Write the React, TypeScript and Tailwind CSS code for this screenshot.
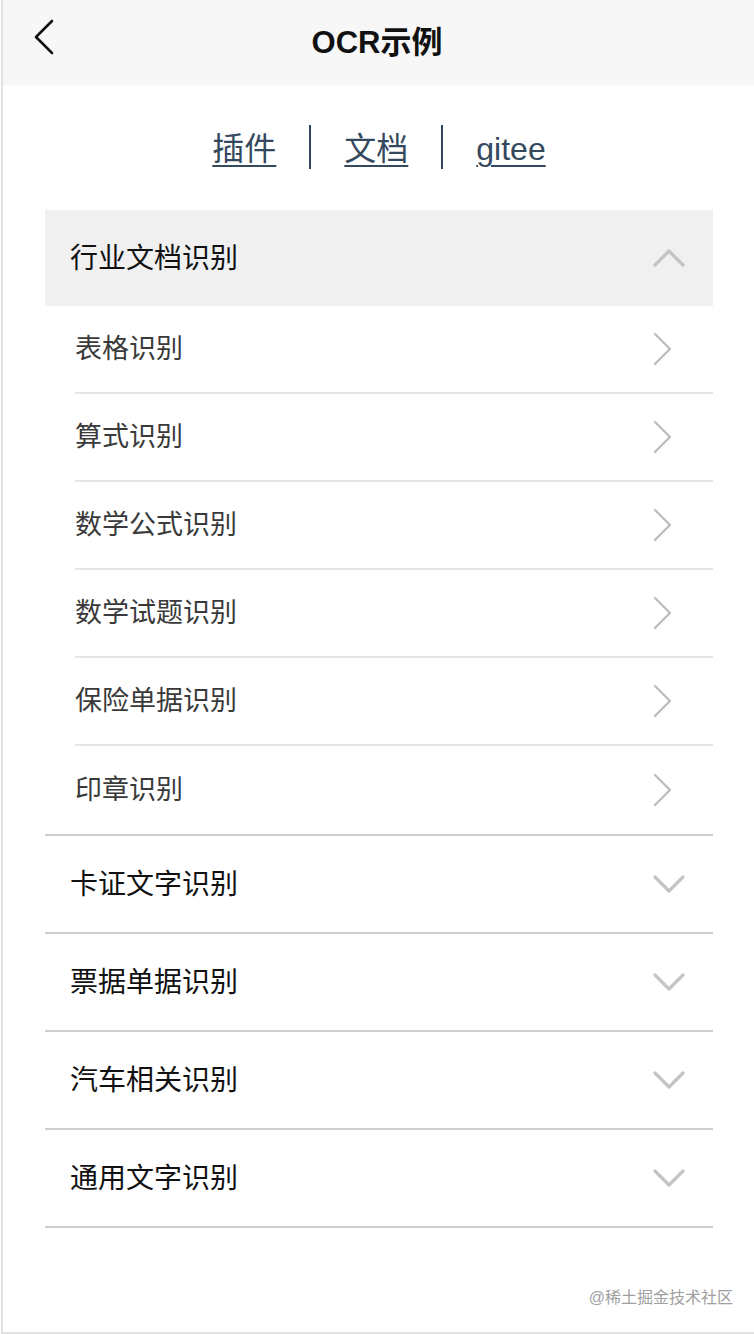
import React, { useState } from 'react';

const font = { fontFamily: '"Liberation Sans", "Noto Sans CJK SC", sans-serif' };

const sections = [
  {
    id: 'doc',
    title: '行业文档识别',
    items: ['表格识别', '算式识别', '数学公式识别', '数学试题识别', '保险单据识别', '印章识别'],
  },
  { id: 'card', title: '卡证文字识别', items: [] },
  { id: 'bill', title: '票据单据识别', items: [] },
  { id: 'car', title: '汽车相关识别', items: [] },
  { id: 'common', title: '通用文字识别', items: [] },
];

const links = ['插件', '文档', 'gitee'];

const BackIcon = () => (
  <svg width="22" height="36" viewBox="0 0 22 36" fill="none">
    <path d="M19 2 L3 18 L19 34" stroke="#111" strokeWidth="2.6" strokeLinecap="round" strokeLinejoin="round" />
  </svg>
);

const Chevron = ({ up }: { up: boolean }) => (
  <svg width="32" height="20" viewBox="0 0 32 20" fill="none">
    <path
      d={up ? 'M2 17 L16 3 L30 17' : 'M2 3 L16 17 L30 3'}
      stroke="#c4c4c4"
      strokeWidth="3.2"
      strokeLinecap="round"
      strokeLinejoin="round"
    />
  </svg>
);

const ArrowRight = () => (
  <svg width="20" height="34" viewBox="0 0 20 34" fill="none">
    <path d="M2 2 L17 17 L2 32" stroke="#bdbdbd" strokeWidth="2.4" strokeLinecap="round" strokeLinejoin="round" />
  </svg>
);

export default function App() {
  const [open, setOpen] = useState('doc');

  return (
    <div className="w-[754px] h-[1334px] bg-white border-l-2 border-b-2 border-[#e3e3e3] ml-[1px] flex flex-col relative" style={font}>
      {/* Header */}
      <div className="h-[85px] bg-[#f7f7f7] flex items-center relative shrink-0">
        <button className="absolute left-[30px] top-[19px]">
          <BackIcon />
        </button>
        <h1 className="w-full text-center text-[31px] font-bold text-[#111] leading-none -ml-[2px]">OCR示例</h1>
      </div>

      {/* Links */}
      <div className="flex items-center justify-center h-[128px] text-[32px] text-[#34495e]">
        {links.map((l, i) => (
          <React.Fragment key={l}>
            {i > 0 && <span className="w-[2px] h-[44px] bg-[#34495e] mx-[33px] -mt-[4px]" />}
            <a className="underline underline-offset-[5px] decoration-[2px] leading-none">{l}</a>
          </React.Fragment>
        ))}
      </div>

      {/* Accordion */}
      <div className="mx-[42px] mt-[-3px]">
        {sections.map((s) => {
          const isOpen = open === s.id;
          return (
            <div key={s.id} className="border-b-2 border-[#d0d0d0]">
              <button
                onClick={() => setOpen(isOpen ? '' : s.id)}
                className={`w-full flex items-center justify-between pl-[25px] pr-[28px] ${
                  isOpen ? 'h-[96px] bg-[#f0f0f1]' : 'h-[96px] bg-white'
                }`}
              >
                <span className="text-[28px] text-[#111] mt-[2px]">{s.title}</span>
                <Chevron up={isOpen} />
              </button>
              {isOpen && (
                <div className="pl-[30px]">
                  {s.items.map((it, idx) => (
                    <div
                      key={it}
                      className={`h-[88px] flex items-center justify-between pr-[40px] ${
                        idx < s.items.length - 1 ? 'border-b-2 border-[#e6e6e6]' : ''
                      }`}
                    >
                      <span className="text-[27px] text-[#3a3a3a]">{it}</span>
                      <ArrowRight />
                    </div>
                  ))}
                </div>
              )}
            </div>
          );
        })}
      </div>

      <div className="absolute right-[22px] bottom-[22px] text-[16px] text-[#a0a0a0]">@稀土掘金技术社区</div>
    </div>
  );
}
